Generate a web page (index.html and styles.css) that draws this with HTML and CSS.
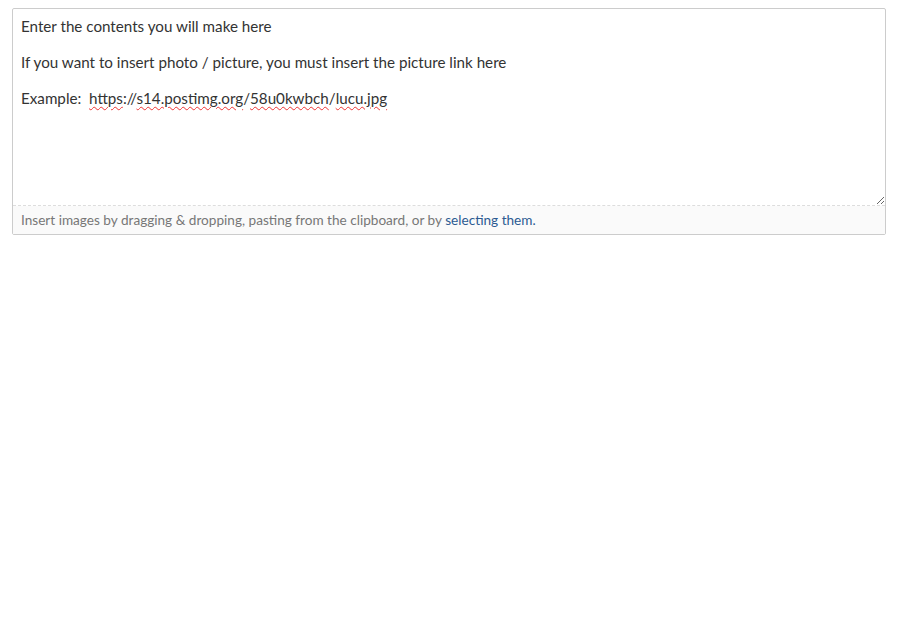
FILE: index.html
```html
<!DOCTYPE html>
<html lang="en">
<head>
  <meta charset="UTF-8">
  <title>Editor</title>
  <link rel="stylesheet" href="styles.css">
</head>
<body>
  <div class="editor">
    <div class="editor-text" contenteditable="true">
      <p>Enter the contents you will make here</p>
      <p>If you want to insert photo / picture, you must insert the picture link here</p>
      <p>Example:&nbsp; <span class="typo">https</span>://<span class="typo">s14.postimg.org</span>/<span class="typo">58u0kwbch</span>/<span class="typo">lucu.jpg</span></p>
    </div>
    <div class="editor-foot">
      Insert images by dragging &amp; dropping, pasting from the clipboard, or by <a href="#">selecting them.</a>
    </div>
  </div>
</body>
</html>
```

FILE: styles.css
```css
* {margin:0; padding:0; box-sizing:border-box;}
body {
  background:#fff; color:#333;
  font-family: "Source Sans Pro", Lato, "Liberation Sans", sans-serif;
  padding:8px 12px;
}
.editor {
  width:874px; border:1px solid #ccc; border-radius:2px;
}
.editor-text {
  height:197px; padding:8px 8px; font-size:15.2px; line-height:18px;
  resize:vertical; overflow:auto; outline:none;
  border-bottom:1px dashed #ddd;
}
.editor-text p {margin-bottom:18px;}
.typo {
  text-decoration:underline wavy #e33;
  text-decoration-thickness:1px; text-underline-offset:2px;
}
.editor-foot {
  height:28px; padding:0 8px; background:#fafafa;
  font-size:13.6px; line-height:28px; color:#777;
}
.editor-foot a {color:#2c5a92; text-decoration:none;}
```
